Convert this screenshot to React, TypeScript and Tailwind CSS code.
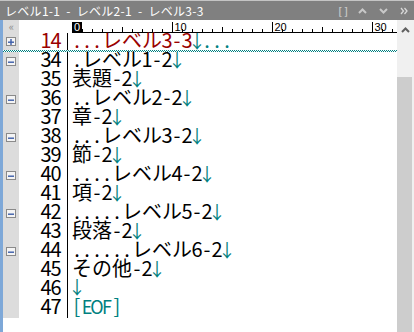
import React from "react";

const BLACK = "#000000";
const TEAL = "#008080";
const RED = "#9a0000";

type Part = [string, string];

const rows: { n: number; fold?: "-"; parts: Part[] }[] = [
  { n: 34, fold: "-", parts: [[".レベル1-2", BLACK], ["↓", TEAL]] },
  { n: 35, parts: [["表題-2", BLACK], ["↓", TEAL]] },
  { n: 36, fold: "-", parts: [["..レベル2-2", BLACK], ["↓", TEAL]] },
  { n: 37, parts: [["章-2", BLACK], ["↓", TEAL]] },
  { n: 38, fold: "-", parts: [["...レベル3-2", BLACK], ["↓", TEAL]] },
  { n: 39, parts: [["節-2", BLACK], ["↓", TEAL]] },
  { n: 40, fold: "-", parts: [["....レベル4-2", BLACK], ["↓", TEAL]] },
  { n: 41, parts: [["項-2", BLACK], ["↓", TEAL]] },
  { n: 42, fold: "-", parts: [[".....レベル5-2", BLACK], ["↓", TEAL]] },
  { n: 43, parts: [["段落-2", BLACK], ["↓", TEAL]] },
  { n: 44, fold: "-", parts: [["......レベル6-2", BLACK], ["↓", TEAL]] },
  { n: 45, parts: [["その他-2", BLACK], ["↓", TEAL]] },
  { n: 46, parts: [["↓", TEAL]] },
  { n: 47, parts: [["[EOF]", TEAL]] },
];

const isWide = (c: string) => /[\u3000-\u30ff\u4e00-\u9fff\uff00-\uffef]/.test(c);

function cellClass(c: string) {
  if (isWide(c)) return "inline-flex w-[20px] shrink-0 justify-center";
  if (c === "↓") return "inline-flex w-[10px] shrink-0 justify-center text-[18px]";
  if (/[A-Z]/.test(c)) return "inline-flex w-[10px] shrink-0 justify-center text-[18px]";
  return "inline-flex w-[10px] shrink-0 justify-center";
}

// one fixed cell per character, like the editor's grid
function Cells({ parts }: { parts: Part[] }) {
  return (
    <>
      {parts.map(([text, color], i) =>
        Array.from(text).map((c, j) => (
          <span key={`${i}-${j}`} style={{ color }} className={cellClass(c)}>
            {c}
          </span>
        ))
      )}
    </>
  );
}

function FoldBox({ plus }: { plus?: boolean }) {
  return (
    <div className="ml-[3px] flex h-[9px] w-[10px] items-center justify-center border border-[#8a8a8a] bg-[#f4f4f4]">
      <svg width="6" height="6" viewBox="0 0 6 6">
        <rect x="0" y="2.5" width="6" height="1.4" fill="#3b5ca8" />
        {plus && <rect x="2.3" y="0" width="1.4" height="6" fill="#3b5ca8" />}
      </svg>
    </div>
  );
}

function Line({ n, color, fold, parts, h }: { n: number; color: string; fold?: "-" | "+"; parts: Part[]; h: string }) {
  return (
    <div className={`flex ${h} shrink-0 leading-[13px]`}>
      <div className="flex w-[16px] shrink-0 items-center bg-[#dcdcdc]">
        {fold && <FoldBox plus={fold === "+"} />}
      </div>
      <div className="flex w-[42px] shrink-0 items-start justify-end">
        <Cells parts={[[String(n), color]]} />
      </div>
      <div className="w-[6px] shrink-0" />
      <div className="w-[1px] shrink-0 bg-black" />
      <div className="w-[4px] shrink-0" />
      <div className="flex h-[13px] items-baseline whitespace-pre">
        <Cells parts={parts} />
      </div>
    </div>
  );
}

function Ruler() {
  const ticks = [];
  for (let k = 1; k <= 32; k++) {
    const x = k * 10 + 0.5;
    if (k % 10 === 0) {
      ticks.push(
        <g key={k}>
          <line x1={x} y1={2} x2={x} y2={12} stroke="#000" />
          <text x={x + 2} y={11} fontSize="11" fill="#000" fontFamily="Liberation Sans, sans-serif">
            {k}
          </text>
        </g>
      );
    } else {
      ticks.push(<line key={k} x1={x} y1={k % 5 === 0 ? 7 : 9} x2={x} y2={12} stroke="#000" />);
    }
  }
  return (
    <svg width="325" height="13" className="block">
      <rect x="0" y="2" width="10" height="10" fill="#000" />
      <text x="2" y="11" fontSize="11" fill="#fff" fontFamily="Liberation Sans, sans-serif">
        0
      </text>
      {ticks}
      <line x1="0" y1="12.5" x2="325" y2="12.5" stroke="#000" />
    </svg>
  );
}

function Chevron({ up, color }: { up?: boolean; color: string }) {
  return (
    <svg width="9" height="6" viewBox="0 0 9 6">
      <polyline
        points={up ? "1,5 4.5,1.5 8,5" : "1,1 4.5,4.5 8,1"}
        fill="none"
        stroke={color}
        strokeWidth="2"
      />
    </svg>
  );
}

export default function App() {
  return (
    <div className="flex h-[332px] w-[414px] flex-col overflow-hidden bg-white font-['Noto_Sans_CJK_JP',sans-serif]">
      {/* Title bar */}
      <div className="flex h-[20px] shrink-0 items-center border-t border-[#c4c4c4] bg-[#808080] pl-[5px] pr-[6px]">
        <span className="whitespace-pre text-[12px] leading-none tracking-[0.3px] text-white">レベル1-1  -  レベル2-1  -  レベル3-3</span>
        <div className="ml-auto flex items-center gap-[8px] text-[#c8c8c8]">
          <span className="whitespace-pre text-[10px] font-bold leading-none">[ ]</span>
          <span className="ml-[2px]"><Chevron up color="#c8c8c8" /></span>
          <span className="ml-[4px]"><Chevron color="#c8c8c8" /></span>
          <svg width="8" height="8" viewBox="0 0 8 8" className="ml-[4px]">
            <polyline points="1,1 3.5,4 1,7" fill="none" stroke="#d8d8d8" strokeWidth="1.3" />
            <polyline points="4.5,1 7,4 4.5,7" fill="none" stroke="#d8d8d8" strokeWidth="1.3" />
          </svg>
        </div>
      </div>

      {/* Body */}
      <div className="flex min-h-0 flex-1">
        <div className="w-[3px] shrink-0 bg-[#7ea8d8]" />
        <div className="flex min-w-0 flex-1 flex-col text-[20px]">
          {/* Ruler row */}
          <div className="flex h-[13px] shrink-0">
            <div className="flex w-[16px] shrink-0 items-center justify-center bg-[#dcdcdc] pl-[1px] text-[11px] leading-none text-[#8a8a8a]">
              «
            </div>
            <div className="w-[53px] shrink-0" />
            <Ruler />
          </div>

          {/* Folded line 14 */}
          <Line n={14} color={RED} fold="+" h="h-[17px]" parts={[["...レベル3-3", RED], ["↓...", TEAL]]} />
          <div className="h-[2px] shrink-0 bg-[conic-gradient(#008080_25%,transparent_0_50%,#008080_0_75%,transparent_0)] bg-[length:2px_2px]" />

          {rows.map((r) => (
            <Line key={r.n} n={r.n} color={BLACK} fold={r.fold} h="h-[19px]" parts={r.parts} />
          ))}
        </div>

        {/* Scrollbar */}
        <div className="flex w-[17px] shrink-0 flex-col bg-[#f0f0f0]">
          <div className="flex h-[20px] items-center justify-center pr-[1px]">
            <Chevron up color="#606060" />
          </div>
          <div className="h-[37px]" />
          <div className="w-[15px] flex-1 bg-[#cdcdcd]" />
        </div>
      </div>
    </div>
  );
}
